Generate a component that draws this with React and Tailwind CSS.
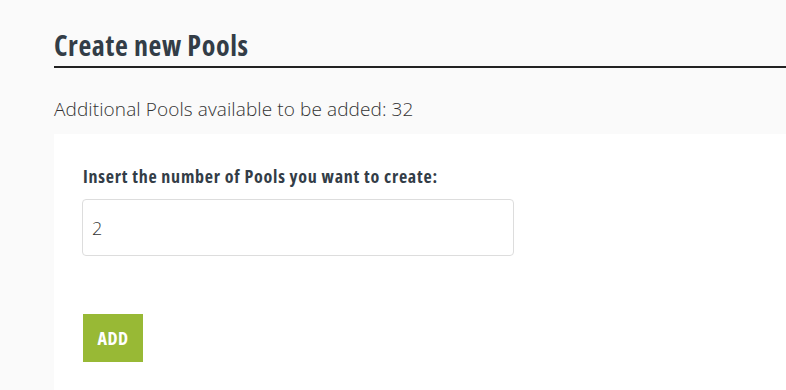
import React, { useState } from "react";

export default function App() {
  const [count, setCount] = useState("2");

  return (
    <div className="min-h-[390px] bg-[#fafafa] pl-[54px] font-['Open_Sans',sans-serif] text-[#333]">
      <div className="pt-[26px]">
        <h2 className="text-[28px] font-bold leading-[38px] tracking-[0.6px] text-[#333d47] [font-stretch:75%]">
          Create new Pools
        </h2>
        <div className="mt-[2px] h-[2px] bg-[#222]" />
      </div>

      <p className="mt-[29px] text-[19px] font-light leading-[24px] tracking-[0.1px] text-[#333]">
        Additional Pools available to be added: 32
      </p>

      <div className="mt-[13px] bg-white pb-[28px] pl-[29px] pt-[30px]">
        <label className="block text-[18px] font-bold leading-[24px] tracking-[0.75px] text-[#333d47] [font-stretch:75%]">
          Insert the number of Pools you want to create:
        </label>
        <input
          value={count}
          onChange={(e) => setCount(e.target.value)}
          className="-ml-px mt-[11px] block h-[57px] w-[432px] rounded-[4px] border border-[#ddd] bg-white px-[9px] text-[18px] font-light text-[#333] outline-none"
        />
        <button className="mt-[58px] h-[48px] w-[60px] bg-[#98b935] text-[18px] font-bold tracking-[0.5px] text-white [font-stretch:75%]">
          ADD
        </button>
      </div>
    </div>
  );
}
